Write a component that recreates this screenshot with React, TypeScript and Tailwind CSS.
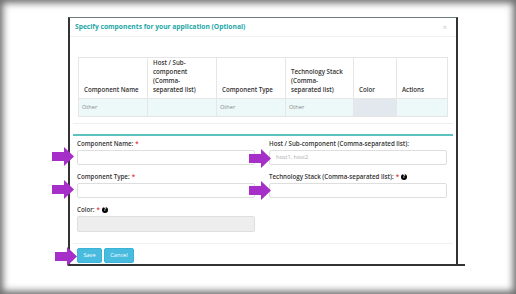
import React from 'react';

const font = { fontFamily: '"Open Sans", "Liberation Sans", sans-serif' };

function Arrow({ className }: { className: string }) {
  return (
    <svg className={`absolute ${className}`} width="22" height="19" viewBox="0 0 22 19">
      <polygon points="0,5 12,5 12,0 22,9.5 12,19 12,14 0,14" fill="#a62fc9" />
    </svg>
  );
}

function Help() {
  return (
    <span className="ml-[2px] inline-flex h-[6px] w-[6px] items-center justify-center rounded-full bg-black text-[5px] font-bold leading-none text-white">
      ?
    </span>
  );
}

function Req() {
  return <span className="ml-[2px] text-[#e53935]">*</span>;
}

export default function App() {
  const headers = [
    { lines: ['Component Name'], w: 'w-[69px]' },
    { lines: ['Host / Sub-', 'component', '(Comma-', 'separated list)'], w: 'w-[69px]' },
    { lines: ['Component Type'], w: 'w-[69px]' },
    { lines: ['Technology Stack', '(Comma-', 'separated list)'], w: 'w-[68px]' },
    { lines: ['Color'], w: 'w-[43px]' },
    { lines: ['Actions'], w: 'w-[51px]' },
  ];
  const row = ['Other', '', 'Other', 'Other', '', ''];

  return (
    <div
      className="relative h-[294px] w-[516px] overflow-hidden bg-white pl-[68px] pt-[17px] shadow-[inset_0_0_7px_3px_rgba(60,60,60,0.75)]"
      style={font}
    >
      {/* Modal */}
      <div className="relative flex h-[249px] w-[390px] flex-col border-b-2 border-l-2 border-r-2 border-t border-b-[#333] border-l-[#333] border-r-[#333] border-t-[#6b7b7b] bg-white">
        {/* Header */}
        <div className="flex h-[19px] items-center justify-between border-b border-[#f0f0f0] pl-[5px] pr-[9px]">
          <span className="text-[6.7px] font-bold text-[#22a8a8]">
            Specify components for your application (Optional)
          </span>
          <span className="text-[8px] leading-none text-[#c8c8c8]">×</span>
        </div>

        {/* Table panel */}
        <div className="mx-[3px] border-b border-[#eeeeee] px-[5px] pb-[6px] pt-[20px]">
          <table className="border-collapse text-[6.2px] text-[#333]">
            <thead>
              <tr className="h-[41px]">
                {headers.map((h, i) => (
                  <th
                    key={i}
                    className={`${h.w} border border-[#e6e6e6] px-[5px] pb-[4px] text-left align-bottom font-semibold leading-[9px]`}
                  >
                    {h.lines.map((l) => (
                      <div key={l} className="whitespace-nowrap">
                        {l}
                      </div>
                    ))}
                  </th>
                ))}
              </tr>
            </thead>
            <tbody>
              <tr className="h-[18px] bg-[#edf8f8]">
                {row.map((c, i) => (
                  <td
                    key={i}
                    className={`border border-[#e6e6e6] px-[3px] text-[5.6px] text-[#888] ${i === 4 ? 'bg-[#e2e8ee]' : ''}`}
                  >
                    {c}
                  </td>
                ))}
              </tr>
            </tbody>
          </table>
        </div>

        {/* Teal divider */}
        <div className="mx-[3px] mt-[10px] h-[2px] bg-[#5cc3c0]" />

        {/* Form */}
        <div className="grid grid-cols-[178px_178px] gap-x-[14px] px-[7px] pt-[1px] text-[6.2px] font-semibold text-[#333]">
          <div>
            <div className="flex h-[13px] items-center">
              Component Name:<Req />
            </div>
            <div className="h-[15px] rounded-[2px] border border-[#dedede] bg-white" />
          </div>
          <div>
            <div className="flex h-[13px] items-center">Host / Sub-component (Comma-separated list):</div>
            <div className="flex h-[15px] items-center rounded-[2px] border border-[#dedede] bg-white pl-[6px] text-[5.6px] font-normal text-[#aaa]">
              host1, host2
            </div>
          </div>
          <div className="mt-[5px]">
            <div className="flex h-[13px] items-center">
              Component Type:<Req />
            </div>
            <div className="h-[15px] rounded-[2px] border border-[#dedede] bg-white" />
          </div>
          <div className="mt-[5px]">
            <div className="flex h-[13px] items-center">
              Technology Stack (Comma-separated list):<Req />
              <Help />
            </div>
            <div className="h-[15px] rounded-[2px] border border-[#dedede] bg-white" />
          </div>
          <div className="mt-[5px]">
            <div className="flex h-[13px] items-center">
              Color:<Req />
              <Help />
            </div>
            <div className="h-[16px] rounded-[2px] border border-[#dedede] bg-[#eeeeee]" />
          </div>
        </div>

        {/* Footer */}
        <div className="mx-[3px] mt-[11px] border-t border-[#f0f0f0] px-[4px] pt-[4px]">
          <div className="flex gap-[2px]">
            <button className="h-[15px] w-[25px] rounded-[2px] border border-[#3bb3d8] bg-[#48bbdf] text-[5.6px] text-white">
              Save
            </button>
            <button className="h-[15px] w-[30px] rounded-[2px] border border-[#3bb3d8] bg-[#48bbdf] text-[5.6px] text-white">
              Cancel
            </button>
          </div>
        </div>

        <div className="absolute -bottom-[2px] -right-[9px] h-[2px] w-[8px] bg-[#333]" />
      </div>

      <Arrow className="left-[52px] top-[147px]" />
      <Arrow className="left-[249px] top-[149px]" />
      <Arrow className="left-[52px] top-[180px]" />
      <Arrow className="left-[249px] top-[181px]" />
      <Arrow className="left-[55px] top-[247px]" />
    </div>
  );
}
